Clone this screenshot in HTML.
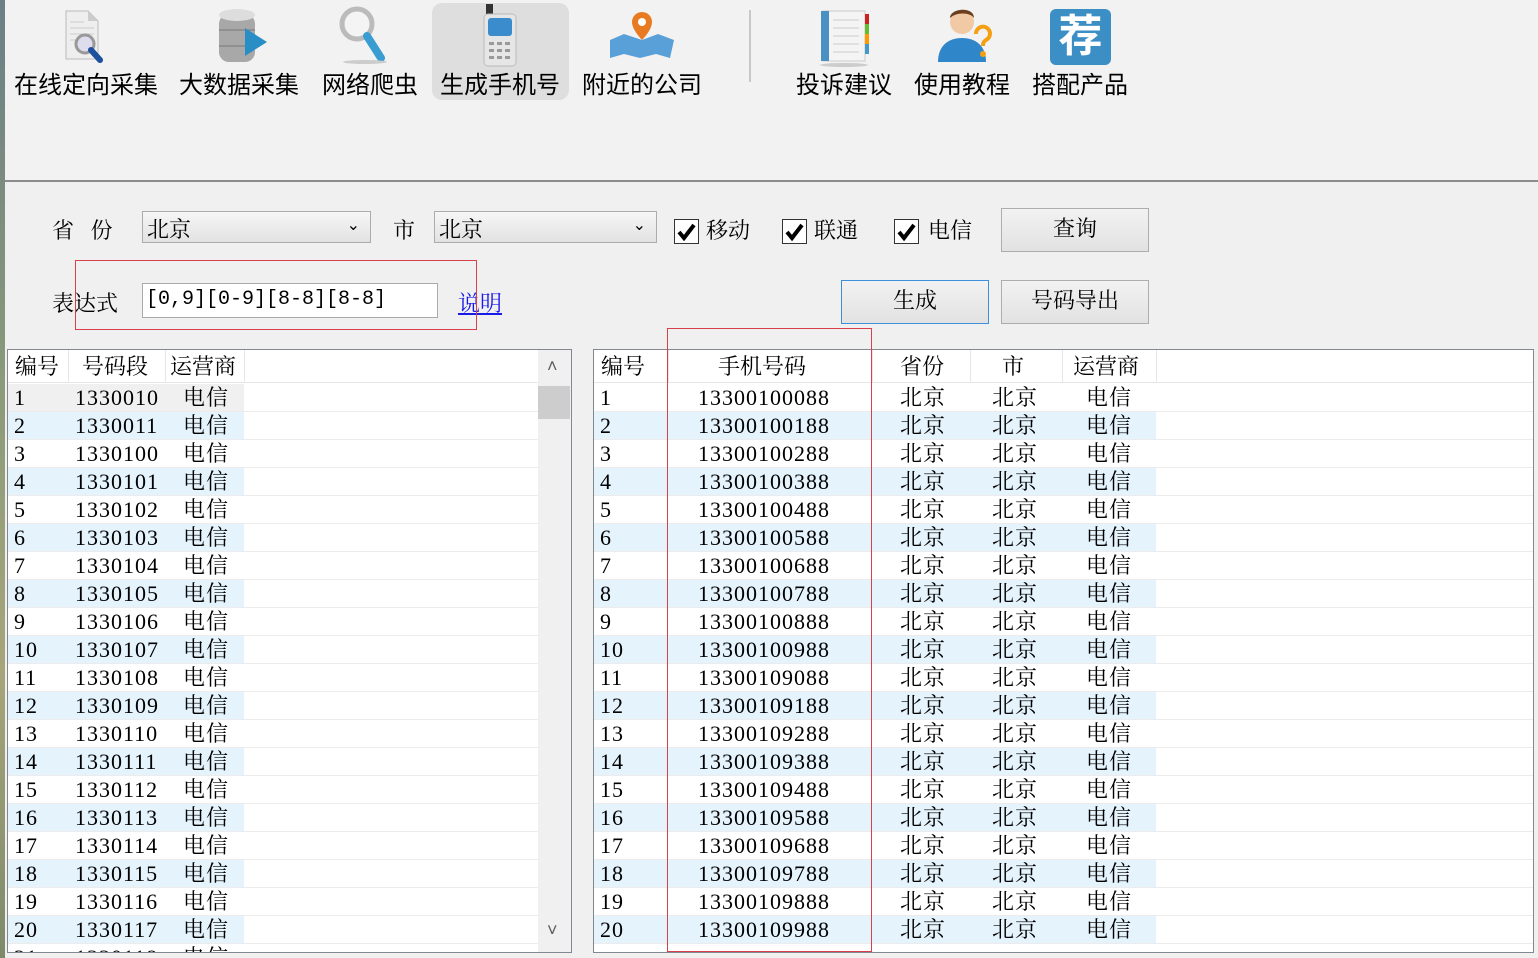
<!DOCTYPE html>
<html><head><meta charset="utf-8"><style>
*{margin:0;padding:0;box-sizing:border-box}
body{width:1538px;height:958px;overflow:hidden;background:#f0f0f0;position:relative;font-family:"Liberation Sans","Noto Sans CJK SC",sans-serif;color:#000}
.a{position:absolute}
.strip{left:0;top:0;width:5px;height:958px;background:linear-gradient(#6c7f86,#8a9a7a 40%,#a7a57a 70%,#7d8a6a)}
.tb{left:5px;top:0;width:1533px;height:182px;background:#f2f2f2;border-bottom:2px solid #8c8c8c}
.lbl{font-size:24px;top:65px;white-space:nowrap;text-align:center}
.f{font-size:22px;font-family:"Liberation Serif","Noto Serif CJK SC",serif}
.combo{background:linear-gradient(#f6f6f6,#e2e2e2);border:1px solid #acacac;height:32px}
.btn{background:linear-gradient(#f2f2f2,#e2e2e2);border:1px solid #adadad;text-align:center;font-size:22px;line-height:40px;font-family:"Liberation Serif","Noto Serif CJK SC",serif}
.cb{width:25px;height:25px;border:1px solid #333;background:#fff}
.tbl{background:#fff;border:1px solid #828790;overflow:hidden}
.hd{top:0;left:0;height:33px;width:100%;background:#fff;border-bottom:1px solid #e6e6e6}
.r{left:0;width:100%;height:28px;border-bottom:1px solid #ececec;font-size:22px;font-family:"Liberation Serif","Noto Serif CJK SC",serif;line-height:27px;letter-spacing:1px}
.r span,.hd span{position:absolute;top:0;height:100%;white-space:nowrap}
.hd span{font-size:22px;line-height:34px;font-family:"Liberation Serif","Noto Serif CJK SC",serif}
</style></head><body>
<div class="a strip"></div>
<div class="a tb"></div>
<div class="a" style="left:432px;top:3px;width:137px;height:97px;background:#dedede;border-radius:10px"></div>
<svg class="a" style="left:60px;top:8px" width="56" height="56" viewBox="0 0 56 56"><path d="M6 3h22l10 10v38H6z" fill="#eee" stroke="#bbb"/><path d="M28 3v10h10" fill="#ccc"/><g stroke="#ccc"><line x1="10" y1="14" x2="24" y2="14"/><line x1="10" y1="20" x2="34" y2="20"/><line x1="10" y1="26" x2="34" y2="26"/><line x1="10" y1="32" x2="34" y2="32"/></g><circle cx="25" cy="36" r="9" fill="#dde" stroke="#999" stroke-width="3"/><line x1="31" y1="42" x2="40" y2="52" stroke="#1c4f9c" stroke-width="6" stroke-linecap="round"/></svg>
<svg class="a" style="left:215px;top:6px" width="60" height="60" viewBox="0 0 60 60"><rect x="4" y="8" width="36" height="48" rx="10" fill="#a8a8a8"/><ellipse cx="22" cy="9" rx="18" ry="6" fill="#ddd"/><line x1="4" y1="24" x2="40" y2="24" stroke="#777"/><line x1="4" y1="40" x2="40" y2="40" stroke="#777"/><path d="M30 22l22 14-22 14z" fill="#2a8ec6"/></svg>
<svg class="a" style="left:335px;top:4px" width="60" height="60" viewBox="0 0 60 60"><circle cx="22" cy="20" r="15" fill="#f4f4f4" stroke="#bbb" stroke-width="5"/><line x1="32" y1="32" x2="46" y2="54" stroke="#3a9dd1" stroke-width="8" stroke-linecap="round"/><ellipse cx="30" cy="58" rx="22" ry="2" fill="#ccc"/></svg>
<svg class="a" style="left:478px;top:4px" width="44" height="64" viewBox="0 0 44 64"><rect x="8" y="0" width="7" height="12" fill="#333"/><rect x="6" y="10" width="32" height="52" rx="4" fill="#e6e6e6" stroke="#bbb"/><rect x="10" y="14" width="24" height="18" rx="3" fill="#3a8ccc"/><g fill="#999"><rect x="11" y="38" width="5" height="3"/><rect x="19" y="38" width="5" height="3"/><rect x="27" y="38" width="5" height="3"/><rect x="11" y="45" width="5" height="3"/><rect x="19" y="45" width="5" height="3"/><rect x="27" y="45" width="5" height="3"/><rect x="11" y="52" width="5" height="3"/><rect x="19" y="52" width="5" height="3"/><rect x="27" y="52" width="5" height="3"/></g></svg>
<svg class="a" style="left:608px;top:10px" width="68" height="50" viewBox="0 0 68 50"><path d="M2 30l14-6 18 6 16-6 16 6-4 18-14-4-16 4-16-4-14 4z" fill="#5aa0d8"/><path d="M34 2a10 10 0 0 1 10 10c0 8-10 18-10 18s-10-10-10-18a10 10 0 0 1 10-10z" fill="#e87a22"/><circle cx="34" cy="12" r="4" fill="#fff"/></svg>
<div class="a" style="left:749px;top:10px;width:2px;height:72px;background:#c8c8c8"></div>
<svg class="a" style="left:815px;top:8px" width="58" height="60" viewBox="0 0 58 60"><rect x="8" y="3" width="42" height="50" fill="#f4f4f4" stroke="#ccc"/><rect x="6" y="3" width="8" height="50" fill="#4a90c2"/><g stroke="#ccc"><line x1="18" y1="12" x2="44" y2="12"/><line x1="18" y1="20" x2="44" y2="20"/><line x1="18" y1="28" x2="44" y2="28"/><line x1="18" y1="36" x2="44" y2="36"/><line x1="18" y1="44" x2="44" y2="44"/></g><rect x="50" y="6" width="4" height="10" fill="#c22"/><rect x="50" y="16" width="4" height="10" fill="#6b3"/><rect x="50" y="26" width="4" height="10" fill="#f90"/><rect x="50" y="36" width="4" height="10" fill="#49c"/><ellipse cx="29" cy="57" rx="24" ry="2" fill="#ccc"/></svg>
<svg class="a" style="left:934px;top:4px" width="60" height="62" viewBox="0 0 60 62"><circle cx="28" cy="18" r="12" fill="#f1c9a5"/><path d="M16 14c0-10 24-12 24 0c-4-6-18-6-24 0z" fill="#6b3e1e"/><path d="M4 58c0-16 10-24 24-24s24 8 24 24z" fill="#2f86c8"/><path d="M42 30a7 7 0 1 1 10 6c-3 2-3 4-3 6" fill="none" stroke="#f4a012" stroke-width="4"/><circle cx="49" cy="50" r="3" fill="#f4a012"/></svg>
<div class="a" style="left:1050px;top:9px;width:61px;height:56px;background:#3b8fc4;border-radius:6px;color:#fff;font-size:44px;line-height:56px;text-align:center;font-weight:bold">荐</div>
<div class="a lbl" style="left:14px">在线定向采集</div>
<div class="a lbl" style="left:179px">大数据采集</div>
<div class="a lbl" style="left:322px">网络爬虫</div>
<div class="a lbl" style="left:440px">生成手机号</div>
<div class="a lbl" style="left:582px">附近的公司</div>
<div class="a lbl" style="left:796px">投诉建议</div>
<div class="a lbl" style="left:914px">使用教程</div>
<div class="a lbl" style="left:1032px">搭配产品</div>
<div class="a f" style="left:52px;top:214px">省&nbsp;&nbsp;&nbsp;份</div>
<div class="a combo" style="left:142px;top:211px;width:229px"><span class="a f" style="left:4px;top:1px">北京</span><span class="a" style="right:10px;top:3px;font-size:16px">&#8964;</span></div>
<div class="a f" style="left:393px;top:214px">市</div>
<div class="a combo" style="left:434px;top:211px;width:223px"><span class="a f" style="left:4px;top:1px">北京</span><span class="a" style="right:10px;top:3px;font-size:16px">&#8964;</span></div>
<div class="a cb" style="left:674px;top:219px"><svg width="23" height="23"><path d="M4 12l5 6 10-13" fill="none" stroke="#000" stroke-width="4"/></svg></div>
<div class="a f" style="left:706px;top:214px">移动</div>
<div class="a cb" style="left:782px;top:219px"><svg width="23" height="23"><path d="M4 12l5 6 10-13" fill="none" stroke="#000" stroke-width="4"/></svg></div>
<div class="a f" style="left:814px;top:214px">联通</div>
<div class="a cb" style="left:894px;top:219px"><svg width="23" height="23"><path d="M4 12l5 6 10-13" fill="none" stroke="#000" stroke-width="4"/></svg></div>
<div class="a f" style="left:928px;top:214px">电信</div>
<div class="a btn" style="left:1001px;top:208px;width:148px;height:44px">查询</div>
<div class="a f" style="left:52px;top:287px">表达式</div>
<div class="a" style="left:142px;top:283px;width:296px;height:35px;background:#fff;border:1px solid #aaa"><span class="a" style="left:3px;top:4px;font-family:'Liberation Mono',monospace;font-size:20px">[0,9][0-9][8-8][8-8]</span></div>
<div class="a f" style="left:458px;top:287px;color:#1a1ae6;text-decoration:underline">说明</div>
<div class="a" style="left:75px;top:260px;width:402px;height:70px;border:1px solid #d7404a"></div>
<div class="a btn" style="left:841px;top:280px;width:148px;height:44px;border-color:#3c8fd8">生成</div>
<div class="a btn" style="left:1001px;top:280px;width:148px;height:44px">号码导出</div>
<div class="a tbl" style="left:7px;top:349px;width:565px;height:604px">
<div class="a hd"><span style="left:7px">编号</span><span style="left:74px">号码段</span><span style="left:162px">运营商</span></div>
<div class="a" style="left:60px;top:0;width:1px;height:33px;background:#e6e6e6"></div>
<div class="a" style="left:157px;top:0;width:1px;height:33px;background:#e6e6e6"></div>
<div class="a" style="left:236px;top:0;width:1px;height:33px;background:#e6e6e6"></div>
<div id="L"></div>
<div class="a" style="left:530px;top:0;width:34px;height:604px;background:#f0f0f0"></div>
<div class="a" style="left:530px;top:36px;width:32px;height:33px;background:#cdcdcd"></div>
<div class="a" style="left:539px;top:6px;font-size:18px;color:#606060">&#708;</div>
<div class="a" style="left:539px;top:570px;font-size:18px;color:#606060">&#709;</div>
</div>
<div class="a tbl" style="left:593px;top:349px;width:941px;height:604px">
<div class="a hd"><span style="left:7px">编号</span><span style="left:124px">手机号码</span><span style="left:306px">省份</span><span style="left:408px">市</span><span style="left:479px">运营商</span></div>
<div class="a" style="left:74px;top:0;width:1px;height:33px;background:#e6e6e6"></div>
<div class="a" style="left:278px;top:0;width:1px;height:33px;background:#e6e6e6"></div>
<div class="a" style="left:376px;top:0;width:1px;height:33px;background:#e6e6e6"></div>
<div class="a" style="left:468px;top:0;width:1px;height:33px;background:#e6e6e6"></div>
<div class="a" style="left:562px;top:0;width:1px;height:33px;background:#e6e6e6"></div>
<div id="R"></div>
</div>
<div class="a" style="left:667px;top:328px;width:205px;height:624px;border:1px solid #d7404a"></div>
<script>
var L='',R='';
var lc=['1330010','1330011'];for(var i=100;i<=118;i++)lc.push('1330'+i);
for(var i=0;i<21;i++){var t=34+i*28,bg=(i%2==1)?'#e5f3fd':(i==0?'#f0f0f0':'#fff');
L+='<div class="a r" style="top:'+t+'px"><div class="a" style="left:0;top:0;width:236px;height:27px;background:'+bg+'"></div><span style="left:6px">'+(i+1)+'</span><span style="left:67px">'+lc[i]+'</span><span style="left:175px">电信</span></div>';}
for(var i=0;i<20;i++){var t=34+i*28,bg=(i%2==1)?'#e5f3fd':'#fff';
var n=i<10?('1330010'+'0'+i+'88'):('1330010'+'9'+(i-10)+'88');
R+='<div class="a r" style="top:'+t+'px"><div class="a" style="left:0;top:0;width:562px;height:27px;background:'+bg+'"></div><span style="left:6px">'+(i+1)+'</span><span style="left:104px">'+n+'</span><span style="left:306px">北京</span><span style="left:398px">北京</span><span style="left:492px">电信</span></div>';}
document.getElementById('L').outerHTML=L;document.getElementById('R').outerHTML=R;
</script>
</body></html>
